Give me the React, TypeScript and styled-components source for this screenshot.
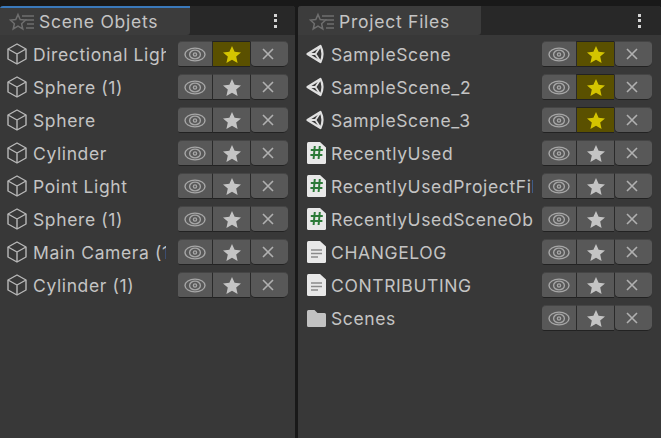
import styled, { createGlobalStyle } from 'styled-components';

const GlobalStyle = createGlobalStyle`
  html, body {
    margin: 0;
    padding: 0;
    background: #191919;
    overflow: hidden;
  }
`;

const Page = styled.div`
  width: 661px;
  height: 438px;
  padding-top: 6px;
  box-sizing: border-box;
  display: flex;
  gap: 3px;
  background: #191919;
  font-family: Inter, "Noto Sans", sans-serif;
  color: #c8c8c8;
`;

const Panel = styled.section<{ $width: number }>`
  width: ${(p) => p.$width}px;
  flex: none;
  display: flex;
  flex-direction: column;
  background: #383838;
  border-radius: 3px 3px 0 0;
  overflow: hidden;
`;

const TabBar = styled.div`
  height: 29px;
  flex: none;
  display: flex;
  justify-content: space-between;
  background: #282828;
`;

const Tab = styled.div<{ $width: number; $active?: boolean }>`
  width: ${(p) => p.$width}px;
  box-sizing: border-box;
  display: flex;
  align-items: center;
  gap: 4px;
  padding: ${(p) => (p.$active ? '0 0 0 9px' : '2px 0 0 11px')};
  background: #3c3c3c;
  border-top: ${(p) => (p.$active ? '2px solid #3a79bb' : 'none')};
  border-radius: 0 0 3px 0;
  font-size: 17.5px;
  letter-spacing: 0.75px;
  color: #c4c4c4;
`;

const Kebab = styled.div<{ $inset: number }>`
  width: 21px;
  margin-right: ${(p) => p.$inset}px;
  display: flex;
  flex-direction: column;
  align-items: center;
  justify-content: center;
  gap: 2.5px;
`;

const Dot = styled.span`
  width: 3px;
  height: 3px;
  background: #d4d4d4;
`;

const List = styled.div`
  display: flex;
  flex-direction: column;
  gap: 7px;
  padding-top: 6px;
`;

const Row = styled.div<{ $inset: number }>`
  height: 26px;
  display: flex;
  align-items: center;
  padding: 0 ${(p) => p.$inset}px 0 6px;
`;

const IconSlot = styled.div`
  width: 22px;
  height: 22px;
  flex: none;
  display: flex;
  align-items: center;
  justify-content: center;
  margin-right: 5px;
`;

const Name = styled.div<{ $width: number }>`
  width: ${(p) => p.$width}px;
  flex: none;
  overflow: hidden;
  white-space: nowrap;
  padding-top: 1px;
  font-size: 17.5px;
  letter-spacing: 0.62px;
  color: #c4c4c4;
`;

const Buttons = styled.div`
  display: flex;
  height: 26px;
  flex: none;
  margin-left: auto;
`;

const ToggleButton = styled.div<{ $width: number; $on?: boolean; $edge?: 'left' | 'right' }>`
  width: ${(p) => p.$width}px;
  box-sizing: border-box;
  display: flex;
  align-items: center;
  justify-content: center;
  background: ${(p) => (p.$on ? '#5a5000' : '#585858')};
  border-bottom: 1px solid #222;
  border-top: 1px solid ${(p) => (p.$on ? '#222' : '#454545')};
  border-left: ${(p) => (p.$edge === 'left' ? 'none' : '1px solid #2a2a2a')};
  border-radius: ${(p) =>
    p.$edge === 'left' ? '4px 0 0 2px' : p.$edge === 'right' ? '0 4px 5px 5px' : '0'};
`;

const EyeIcon = () => (
  <svg width="22" height="15" viewBox="0 0 22 15" fill="none" stroke="#a6a6a6" strokeWidth="1.4">
    <ellipse cx="11" cy="7.5" rx="10" ry="6.4" />
    <ellipse cx="11" cy="7.5" rx="5.4" ry="4.4" />
    <circle cx="11" cy="7.5" r="1.6" />
  </svg>
);

const StarIcon = ({ on }: { on?: boolean }) => (
  <svg width="20" height="19" viewBox="0 0 20 19">
    <path
      d="M10 1 L12.6 6.8 L19 7.4 L14.2 11.6 L15.6 18 L10 14.7 L4.4 18 L5.8 11.6 L1 7.4 L7.4 6.8 Z"
      fill={on ? '#d4c400' : '#c4c4c4'}
    />
  </svg>
);

const CloseIcon = () => (
  <svg width="12" height="12" viewBox="0 0 12 12" stroke="#b0b0b0" strokeWidth="1.6" fill="none" style={{ marginRight: 3 }}>
    <path d="M1 1 L11 11 M11 1 L1 11" />
  </svg>
);

const TabIcon = () => (
  <svg width="26" height="20" viewBox="0 0 26 20" fill="none" stroke="#6e6e6e" strokeWidth="1.5">
    <path d="M9 2.5 L11.2 7.6 L16.6 8.1 L12.6 11.7 L13.8 17 L9 14.2 L4.2 17 L5.4 11.7 L1.4 8.1 L6.8 7.6 Z" />
    <path d="M13 4 H25 M16 8 H25 M18 12 H25 M17 16 H25" strokeWidth="1.3" />
  </svg>
);

const CubeIcon = () => (
  <svg width="20" height="22" viewBox="0 0 20 22" fill="none" stroke="#b8b8b8" strokeWidth="1.4" strokeLinejoin="round">
    <path d="M10 1 L19 6 V16 L10 21 L1 16 V6 Z" />
    <path d="M1 6 L10 11 L19 6 M10 11 V21" />
  </svg>
);

const UnityIcon = () => (
  <svg width="20" height="20" viewBox="0 0 20 20" fill="none" stroke="#e0e0e0" strokeLinejoin="round" style={{ marginLeft: 1 }}>
    <path d="M1.5 10 L14.5 2 Q18.5 10 14.5 18 Z" strokeWidth="2.2" />
    <path d="M2 10 H9.5 L14 3 M9.5 10 L14 17" strokeWidth="1.8" />
  </svg>
);

const DocShape = ({ children }: { children: React.ReactNode }) => (
  <svg width="19" height="22" viewBox="0 0 19 22" style={{ marginLeft: 2 }}>
    <path d="M1.5 0 H13 L19 5.5 V20.5 Q19 22 17.5 22 H1.5 Q0 22 0 20.5 V1.5 Q0 0 1.5 0 Z" fill="#e8e8e8" />
    {children}
  </svg>
);

const ScriptIcon = () => (
  <DocShape>
    <path d="M7.8 4 L6.6 17 M12.8 4 L11.6 17 M3.8 8 H15.8 M3.4 13 H15.4" stroke="#2c7a38" strokeWidth="2" fill="none" />
  </DocShape>
);

const TextIcon = () => (
  <DocShape>
    <path d="M4 9 H15 M4 12.5 H15 M4 16 H11" stroke="#8a8a8a" strokeWidth="1.5" fill="none" />
  </DocShape>
);

const FolderIcon = () => (
  <svg width="19" height="17" viewBox="0 0 19 17" style={{ marginLeft: 2 }}>
    <path d="M1.5 0 H7.5 L10.5 3 H17.5 Q19 3 19 4.5 V15.5 Q19 17 17.5 17 H1.5 Q0 17 0 15.5 V1.5 Q0 0 1.5 0 Z" fill="#c2c2c2" />
  </svg>
);

type Kind = 'cube' | 'unity' | 'script' | 'text' | 'folder';

const icons: Record<Kind, React.ReactNode> = {
  cube: <CubeIcon />,
  unity: <UnityIcon />,
  script: <ScriptIcon />,
  text: <TextIcon />,
  folder: <FolderIcon />,
};

const sceneItems: { name: string; on?: boolean }[] = [
  { name: 'Directional Light', on: true },
  { name: 'Sphere (1)' },
  { name: 'Sphere' },
  { name: 'Cylinder' },
  { name: 'Point Light' },
  { name: 'Sphere (1)' },
  { name: 'Main Camera (1)' },
  { name: 'Cylinder (1)' },
];

const projectItems: { name: string; kind: Kind; on?: boolean }[] = [
  { name: 'SampleScene', kind: 'unity', on: true },
  { name: 'SampleScene_2', kind: 'unity', on: true },
  { name: 'SampleScene_3', kind: 'unity', on: true },
  { name: 'RecentlyUsed', kind: 'script' },
  { name: 'RecentlyUsedProjectFiles', kind: 'script' },
  { name: 'RecentlyUsedSceneObjects', kind: 'script' },
  { name: 'CHANGELOG', kind: 'text' },
  { name: 'CONTRIBUTING', kind: 'text' },
  { name: 'Scenes', kind: 'folder' },
];

const ItemRow = ({ name, kind, on, nameWidth, inset }: { name: string; kind: Kind; on?: boolean; nameWidth: number; inset: number }) => (
  <Row $inset={inset}>
    <IconSlot>{icons[kind]}</IconSlot>
    <Name $width={nameWidth}>{name}</Name>
    <Buttons>
      <ToggleButton $width={34} $edge="left"><EyeIcon /></ToggleButton>
      <ToggleButton $width={38} $on={on}><StarIcon on={on} /></ToggleButton>
      <ToggleButton $width={38} $edge="right"><CloseIcon /></ToggleButton>
    </Buttons>
  </Row>
);

const PanelHead = ({ title, width, active, inset }: { title: string; width: number; active?: boolean; inset: number }) => (
  <TabBar>
    <Tab $width={width} $active={active}>
      <TabIcon />
      {title}
    </Tab>
    <Kebab $inset={inset}>
      <Dot />
      <Dot />
      <Dot />
    </Kebab>
  </TabBar>
);

const App = () => (
  <Page>
    <GlobalStyle />
    <Panel $width={295}>
      <PanelHead title="Scene Objets" width={190} active inset={9} />
      <List>
        {sceneItems.map((item, i) => (
          <ItemRow key={i} name={item.name} kind="cube" on={item.on} nameWidth={133} inset={7} />
        ))}
      </List>
    </Panel>
    <Panel $width={363}>
      <PanelHead title="Project Files" width={183} inset={11} />
      <List>
        {projectItems.map((item) => (
          <ItemRow key={item.name} name={item.name} kind={item.kind} on={item.on} nameWidth={202} inset={9} />
        ))}
      </List>
    </Panel>
  </Page>
);

export default App;
